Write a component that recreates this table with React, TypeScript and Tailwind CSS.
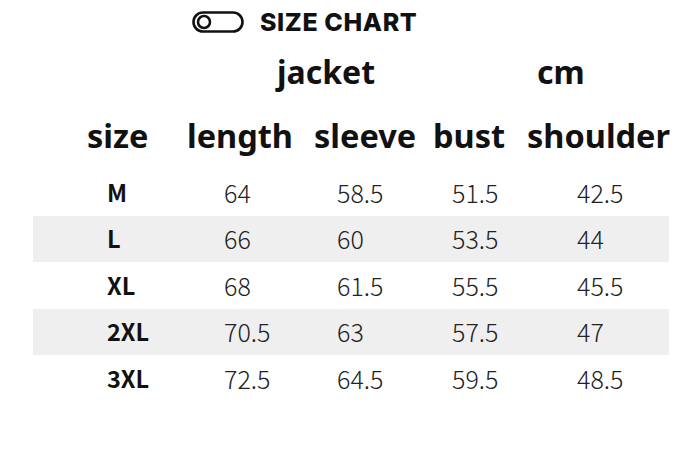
import React from "react";

const rows = [
  { size: "M", length: "64", sleeve: "58.5", bust: "51.5", shoulder: "42.5" },
  { size: "L", length: "66", sleeve: "60", bust: "53.5", shoulder: "44" },
  { size: "XL", length: "68", sleeve: "61.5", bust: "55.5", shoulder: "45.5" },
  { size: "2XL", length: "70.5", sleeve: "63", bust: "57.5", shoulder: "47" },
  { size: "3XL", length: "72.5", sleeve: "64.5", bust: "59.5", shoulder: "48.5" },
];

const heads = ["size", "length", "sleeve", "bust", "shoulder"];

function ToggleIcon() {
  return (
    <svg width="52" height="22" viewBox="0 0 52 22" fill="none">
      <rect x="1.5" y="1.5" width="49" height="19" rx="9.5" stroke="#111" strokeWidth="2.6" />
      <circle cx="12" cy="11" r="6" stroke="#111" strokeWidth="2.6" />
    </svg>
  );
}

export default function App() {
  return (
    <div className="w-[700px] h-[456px] bg-white text-[#111] overflow-hidden">
      {/* Title */}
      <div className="flex items-center pl-[192px] pt-[10px] h-[34px] gap-[16px]">
        <ToggleIcon />
        <span className="font-['Inter'] font-extrabold text-[25px] leading-none tracking-[0.6px]">
          SIZE CHART
        </span>
      </div>

      {/* jacket / cm */}
      <div className="flex items-center h-[76px] pl-[277px] font-['Noto_Sans',sans-serif] font-bold text-[32px] leading-none">
        <span className="w-[260px]">jacket</span>
        <span>cm</span>
      </div>

      {/* Column heads */}
      <div className="grid grid-cols-[100px_127px_119px_94px_1fr] items-center h-[52px] pl-[87px] font-['Noto_Sans',sans-serif] font-bold text-[32.5px] leading-none">
        {heads.map((head) => (
          <span key={head}>{head}</span>
        ))}
      </div>

      {/* Rows */}
      <div className="mx-[33px] w-[636px] mt-[7px]">
        {rows.map((row, i) => (
          <div
            key={row.size}
            className={`grid grid-cols-[117px_113px_115px_125px_1fr] items-center h-[46.5px] pl-[74px] ${
              i % 2 === 1 ? "bg-[#efefef]" : ""
            }`}
          >
            <span className="font-['Noto_Sans_CJK_SC',sans-serif] font-bold text-[23.5px] leading-none">
              {row.size}
            </span>
            <span className="font-['Noto_Sans_CJK_SC',sans-serif] font-light text-[25px] leading-none text-[#222]">
              {row.length}
            </span>
            <span className="font-['Noto_Sans_CJK_SC',sans-serif] font-light text-[25px] leading-none text-[#222]">
              {row.sleeve}
            </span>
            <span className="font-['Noto_Sans_CJK_SC',sans-serif] font-light text-[25px] leading-none text-[#222]">
              {row.bust}
            </span>
            <span className="font-['Noto_Sans_CJK_SC',sans-serif] font-light text-[25px] leading-none text-[#222]">
              {row.shoulder}
            </span>
          </div>
        ))}
      </div>
    </div>
  );
}
